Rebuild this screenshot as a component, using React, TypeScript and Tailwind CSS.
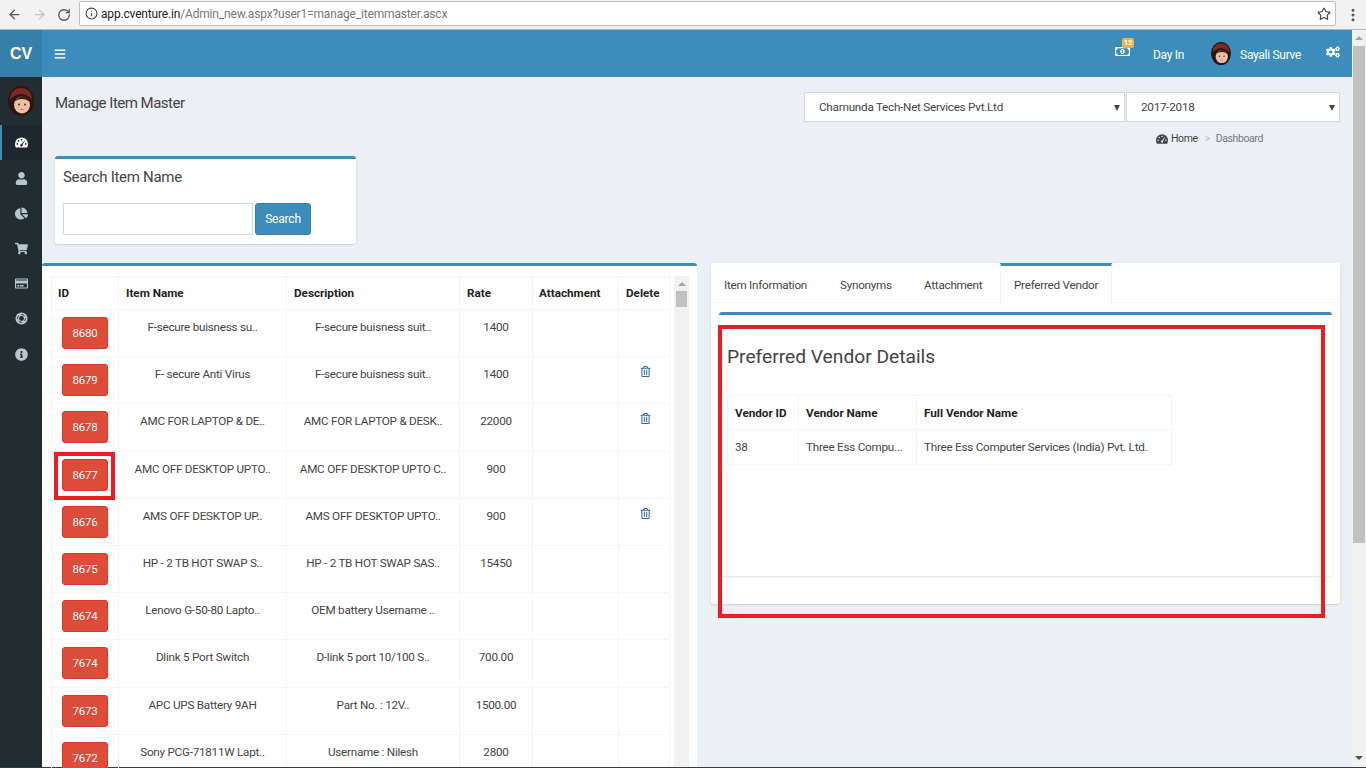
import { ArrowLeft, ArrowRight, EllipsisVertical, Info, RotateCw, Star } from "lucide-react";
import {
  FaBars,
  FaChartPie,
  FaCogs,
  FaInfoCircle,
  FaRegCreditCard,
  FaRegMoneyBillAlt,
  FaRegTrashAlt,
  FaShoppingCart,
  FaUser,
} from "react-icons/fa";

const items = [
  { id: "8680", name: "F-secure buisness su..", desc: "F-secure buisness suit..", rate: "1400", del: false },
  { id: "8679", name: "F- secure Anti Virus", desc: "F-secure buisness suit..", rate: "1400", del: true },
  { id: "8678", name: "AMC FOR LAPTOP & DE..", desc: "AMC FOR LAPTOP & DESK..", rate: "22000", del: true },
  { id: "8677", name: "AMC OFF DESKTOP UPTO..", desc: "AMC OFF DESKTOP UPTO C..", rate: "900", del: false },
  { id: "8676", name: "AMS OFF DESKTOP UP..", desc: "AMS OFF DESKTOP UPTO..", rate: "900", del: true },
  { id: "8675", name: "HP - 2 TB HOT SWAP S..", desc: "HP - 2 TB HOT SWAP SAS..", rate: "15450", del: false },
  { id: "8674", name: "Lenovo G-50-80 Lapto..", desc: "OEM battery Username ..", rate: "", del: false },
  { id: "7674", name: "Dlink 5 Port Switch", desc: "D-link 5 port 10/100 S..", rate: "700.00", del: false },
  { id: "7673", name: "APC UPS Battery 9AH", desc: "Part No. : 12V..", rate: "1500.00", del: false },
  { id: "7672", name: "Sony PCG-71811W Lapt..", desc: "Username : Nilesh", rate: "2800", del: false },
];

function Gauge({ className, hole }: { className: string; hole: string }) {
  return (
    <svg viewBox="0 0 14 11" className={className}>
      <path d="M7 0a7 7 0 0 1 7 7c0 1.500-.4 2.800-1 4H1C.4 9.800 0 8.500 0 7a7 7 0 0 1 7-7z" fill="currentColor" />
      <g fill={hole}>
        <circle cx="2.500" cy="7" r="0.9" />
        <circle cx="3.800" cy="3.800" r="0.9" />
        <circle cx="7" cy="2.500" r="0.9" />
        <circle cx="11.500" cy="7" r="0.9" />
        <circle cx="7" cy="8.500" r="1.300" />
        <path d="M6.500 8 10 3.500l.6.4L7.500 8.800z" />
      </g>
    </svg>
  );
}

function LifeRing({ className }: { className: string }) {
  return (
    <svg viewBox="0 0 14 14" className={className}>
      <circle cx="7" cy="7" r="6.500" fill="currentColor" />
      <circle cx="7" cy="7" r="4.300" fill="none" stroke="#222d32" strokeWidth="1" strokeDasharray="4 2.750" strokeDashoffset="1" />
      <circle cx="7" cy="7" r="2.600" fill="#222d32" />
    </svg>
  );
}

const navIcons = [FaUser, FaChartPie, FaShoppingCart, FaRegCreditCard, LifeRing, FaInfoCircle];

function Avatar({ className }: { className: string }) {
  return (
    <svg viewBox="0 0 26 30" className={className}>
      <ellipse cx="13" cy="15" rx="13" ry="15" fill="#2a1512" />
      <path d="M2 14C2 5 8 2 13 2s11 3 11 12c-3-4-7-6-11-6S5 10 2 14z" fill="#7d2a22" />
      <ellipse cx="14" cy="19" rx="8" ry="8.500" fill="#eebfa5" />
      <path d="M6 16c3-4 6-6 9-6s5 2 7 6c-3-2-5-3-8-3s-5 1-8 3z" fill="#4a1f18" />
      <circle cx="11" cy="18.500" r="0.900" fill="#3a1a14" />
      <circle cx="17" cy="18.500" r="0.900" fill="#3a1a14" />
      <path d="M12.500 23.500h3" stroke="#c0605a" strokeWidth="0.900" />
    </svg>
  );
}

function PageScrollbar() {
  return (
    <div className="w-[14px] shrink-0 bg-[#f1f1f1] flex flex-col items-center">
      <div className="h-[16px] flex items-center justify-center">
        <div className="w-0 h-0 border-x-[4px] border-x-transparent border-b-[4px] border-b-[#a3a3a3]" />
      </div>
      <div className="w-[12px] h-[497px] bg-[#c1c1c1]" />
      <div className="flex-1" />
      <div className="h-[16px] mb-[1px] flex items-center justify-center">
        <div className="w-0 h-0 border-x-[4px] border-x-transparent border-t-[4px] border-t-[#505050]" />
      </div>
    </div>
  );
}

function ItemRow({ item }: { item: (typeof items)[number] }) {
  return (
    <div className="flex h-[47.200px] border-b border-[#f4f4f4] text-[11.700px] tracking-[-0.250px] text-[#444] text-center leading-[20px]">
      <div className="relative w-[68px] shrink-0 border-x border-[#f4f4f4] pl-[10px] pt-[7px] text-[11.500px]">
        <div className="w-[46px] h-[32px] rounded-[3px] bg-[#dd4b39] border border-[#d73925] text-white leading-[30px]">
          {item.id}
        </div>
        {item.id === "8677" && (
          <div className="absolute left-[2px] top-0 w-[61px] h-[48px] border-[4px] border-[#ed1c24]" />
        )}
      </div>
      <div className="w-[168px] shrink-0 border-r border-[#f4f4f4] pt-[7px] whitespace-nowrap">{item.name}</div>
      <div className="w-[173px] shrink-0 border-r border-[#f4f4f4] pt-[7px] whitespace-nowrap">{item.desc}</div>
      <div className="w-[73px] shrink-0 border-r border-[#f4f4f4] pt-[7px]">{item.rate}</div>
      <div className="w-[86px] shrink-0 border-r border-[#f4f4f4]" />
      <div className="w-[51px] shrink-0 border-r border-[#f4f4f4] pl-[2px] pt-[9px] flex justify-center">
        {item.del && <FaRegTrashAlt className="text-[11px] text-[#2f69a8]" />}
      </div>
    </div>
  );
}

export default function App() {
  return (
    <div className="w-[1366px] h-[768px] overflow-hidden flex flex-col bg-[#ecf0f5] font-['Roboto','Noto_Sans',sans-serif]">
      {/* browser bar */}
      <div className="h-[30px] shrink-0 bg-[#f2f2f2] border-b border-[#b8b8b8] flex items-center">
        <ArrowLeft className="ml-[7px] w-[15px] h-[15px] text-[#555]" strokeWidth={2} />
        <ArrowRight className="ml-[10px] w-[15px] h-[15px] text-[#c4c4c4]" strokeWidth={2} />
        <RotateCw className="ml-[10px] w-[14px] h-[14px] text-[#555]" strokeWidth={2.2} />
        <div className="ml-[8px] w-[1257px] h-[25px] -mt-[2px] bg-white border border-[#c0c0c0] rounded-[2px] flex items-center pl-[5px] text-[12px] tracking-[-0.170px]">
          <Info className="w-[13px] h-[13px] text-[#444]" strokeWidth={2} />
          <span className="ml-[3px] text-[#222]">app.cventure.in</span>
          <span className="text-[#777]">/Admin_new.aspx?user1=manage_itemmaster.ascx</span>
          <Star className="ml-auto mr-[4px] w-[14px] h-[14px] text-[#444]" strokeWidth={2} />
        </div>
        <EllipsisVertical className="ml-[9px] w-[16px] h-[16px] text-[#555]" strokeWidth={2.5} />
      </div>

      <div className="flex-1 min-h-0 flex">
        <div className="flex-1 min-w-0 flex flex-col">
          {/* top bar */}
          <div className="h-[47px] shrink-0 bg-[#3c8dbc] flex items-center text-white text-[12px] tracking-[-0.300px]">
            <div className="w-[42px] h-full bg-[#367fa9] flex items-center justify-center font-bold text-[16px] tracking-normal font-['Liberation_Sans',sans-serif]">
              CV
            </div>
            <FaBars className="ml-[12px] w-[12px] h-[12px]" />
            <div className="ml-auto relative -mt-[4px]">
              <FaRegMoneyBillAlt className="w-[15px] h-[15px]" />
              <span className="absolute left-[7px] -top-[6px] w-[12px] h-[10px] rounded-[2px] bg-[#f0ad4e] text-[8px] font-bold leading-[10px] text-center">
                12
              </span>
            </div>
            <span className="ml-[23px] mt-[2px]">Day In</span>
            <Avatar className="ml-[26px] w-[22px] h-[23px]" />
            <span className="ml-[8px] mt-[2px]">Sayali Surve</span>
            <FaCogs className="ml-[25px] mr-[12px] -mt-[3px] w-[14px] h-[14px]" />
          </div>

          <div className="flex-1 min-h-0 flex">
            {/* sidebar */}
            <div className="w-[42px] shrink-0 bg-[#222d32] flex flex-col items-center">
              <Avatar className="mt-[9px] w-[26px] h-[30px]" />
              <div className="mt-[9px] w-full h-[35px] bg-[#1e282c] border-l-2 border-[#3c8dbc] flex items-center justify-center pr-[2px] text-white">
                <Gauge className="w-[13px] h-[11px]" hole="#1e282c" />
              </div>
              {navIcons.map((Icon, i) => (
                <div key={i} className="w-full h-[35.200px] pt-[1px] flex items-center justify-center text-[#b8c7ce]">
                  <Icon className="w-[13px] h-[13px]" />
                </div>
              ))}
            </div>

            {/* content */}
            <div className="flex-1 min-w-0 flex flex-col">
              <div className="flex justify-between h-[186px] shrink-0">
                <div className="pl-[13px]">
                  <h1 className="mt-[16px] text-[15px] tracking-[-0.500px] leading-[20px] text-[#444]">Manage Item Master</h1>
                  <div className="mt-[43px] w-[301px] h-[88px] bg-white border-t-[3px] border-[#3c8dbc] rounded-[3px] shadow-sm px-[8px]">
                    <div className="mt-[8px] text-[15px] tracking-[-0.300px] leading-[20px] text-[#444]">Search Item Name</div>
                    <div className="mt-[16px] flex gap-[2px]">
                      <div className="w-[190px] h-[32px] bg-white border border-[#d2d6de]" />
                      <button className="w-[56px] h-[32px] bg-[#3c8dbc] border border-[#367fa9] rounded-[3px] text-white text-[12px] tracking-[-0.200px]">
                        Search
                      </button>
                    </div>
                  </div>
                </div>
                <div className="pr-[12px]">
                  <div className="mt-[15px] flex gap-px text-[11.700px] tracking-[-0.250px] text-[#444]">
                    <div className="w-[321px] h-[30px] pt-[1px] bg-white border border-[#d2d6de] flex items-center justify-between pl-[14px] pr-[4px]">
                      Chamunda Tech-Net Services Pvt.Ltd
                      <div className="w-0 h-0 border-x-[3.500px] border-x-transparent border-t-[6px] border-t-[#444]" />
                    </div>
                    <div className="w-[214px] h-[30px] pt-[1px] bg-white border border-[#d2d6de] flex items-center justify-between pl-[14px] pr-[4px]">
                      2017-2018
                      <div className="w-0 h-0 border-x-[3.500px] border-x-transparent border-t-[6px] border-t-[#444]" />
                    </div>
                  </div>
                  <div className="mt-[9px] pl-[352px] flex items-center text-[10.500px] tracking-[-0.400px] text-[#444]">
                    <Gauge className="w-[12px] h-[10px]" hole="#ecf0f5" />
                    <span className="ml-[3px]">Home</span>
                    <span className="ml-[7px] text-[#bbb]">&gt;</span>
                    <span className="ml-[6px] text-[#777]">Dashboard</span>
                  </div>
                </div>
              </div>

              <div className="flex-1 min-h-0 flex items-start">
                {/* items list */}
                <div className="w-[655px] shrink-0 h-[600px] bg-white border-t-[3px] border-[#3c8dbc] rounded-t-[3px] flex pl-[9px] pt-[10px]">
                  <div className="w-[619px] shrink-0">
                    <div className="flex h-[34px] border-y border-[#f4f4f4] text-[11.700px] font-bold text-[#222] leading-[33px]">
                      <div className="w-[68px] shrink-0 border-x border-[#f4f4f4] pl-[6px]">ID</div>
                      <div className="w-[168px] shrink-0 border-r border-[#f4f4f4] pl-[7px]">Item Name</div>
                      <div className="w-[173px] shrink-0 border-r border-[#f4f4f4] pl-[7px]">Description</div>
                      <div className="w-[73px] shrink-0 border-r border-[#f4f4f4] pl-[7px]">Rate</div>
                      <div className="w-[86px] shrink-0 border-r border-[#f4f4f4] pl-[6px]">Attachment</div>
                      <div className="w-[51px] shrink-0 border-r border-[#f4f4f4] pl-[7px]">Delete</div>
                    </div>
                    {items.map((item) => (
                      <ItemRow key={item.id} item={item} />
                    ))}
                  </div>
                  <div className="ml-[4px] w-[15px] bg-[#f1f1f1] flex flex-col items-center">
                    <div className="h-[15px] flex items-center justify-center">
                      <div className="w-0 h-0 border-x-[4px] border-x-transparent border-b-[4px] border-b-[#a3a3a3]" />
                    </div>
                    <div className="w-[11px] h-[16px] bg-[#c1c1c1]" />
                  </div>
                </div>

                {/* detail panel */}
                <div className="relative ml-[14px] w-[629px] h-[341px] bg-white rounded-[3px] shadow-sm">
                  <div className="flex h-[40px] border-b border-[#f4f4f4] text-[11.700px] tracking-[-0.250px] text-[#444] leading-[44px]">
                    <div className="w-[129px] pl-[13px]">Item Information</div>
                    <div className="w-[84px]">Synonyms</div>
                    <div className="w-[76px]">Attachment</div>
                    <div className="w-[112px] h-[41px] pl-[13px] border-t-[3px] border-x border-x-[#f4f4f4] border-t-[#3c8dbc] bg-white leading-[38px]">
                      Preferred Vendor
                    </div>
                  </div>
                  <div className="mx-[8px] mt-[9px] h-[264px] border-t-[3px] border-[#3c8dbc] rounded-[3px] shadow-sm flex flex-col">
                    <h2 className="mt-[29px] ml-[8px] text-[19.200px] leading-[26px] text-[#444]">Preferred Vendor Details</h2>
                    <div className="mt-[25px] ml-[8px] w-[445px] text-[11.700px]">
                      <div className="flex h-[35px] border border-[#f4f4f4] font-bold text-[#222] leading-[35px]">
                        <div className="w-[71px] border-r border-[#f4f4f4] pl-[7px]">Vendor ID</div>
                        <div className="w-[118px] border-r border-[#f4f4f4] pl-[7px]">Vendor Name</div>
                        <div className="pl-[7px]">Full Vendor Name</div>
                      </div>
                      <div className="flex h-[35px] border-x border-b border-[#f4f4f4] text-[#444] tracking-[-0.250px] leading-[35px]">
                        <div className="w-[71px] border-r border-[#f4f4f4] pl-[7px]">38</div>
                        <div className="w-[118px] border-r border-[#f4f4f4] pl-[7px] whitespace-nowrap">Three Ess Compu...</div>
                        <div className="pl-[7px] whitespace-nowrap">Three Ess Computer Services (India) Pvt. Ltd.</div>
                      </div>
                    </div>
                  </div>
                  {/* annotation */}
                  <div className="absolute left-[7px] top-[62px] w-[607px] h-[293px] border-[4px] border-[#ed1c24]" />
                </div>
              </div>
            </div>
          </div>
        </div>
        <PageScrollbar />
      </div>
      <div className="h-px shrink-0 bg-[#2b3f52]" />
    </div>
  );
}
